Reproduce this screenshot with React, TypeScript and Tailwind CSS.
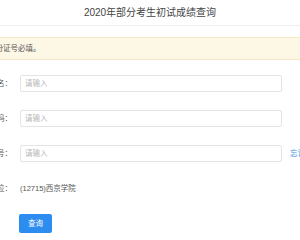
const fields = [
    { label: '姓名：', extra: null },
    { label: '证件号码：', extra: null },
    { label: '准考证号：', extra: '忘记准考证号？' },
];

const App = () => {
    return (
        <div className="w-[300px] h-[240px] overflow-hidden bg-white font-['Liberation_Sans','Noto_Sans_CJK_SC',sans-serif]">
            {/* Title */}
            <div className="h-[26px] flex items-center justify-center border-b border-[#eeeeee] text-[10px] text-[#444]">
                2020年部分考生初试成绩查询
            </div>

            {/* Notice */}
            <div className="mt-[11px] ml-[-21px] h-[23px] flex items-center pl-[9px] bg-[#fdf7e6] border-y border-[#f7e8c4] text-[7.5px] text-[#555] whitespace-nowrap">
                身份证号必填。
            </div>

            {/* Form */}
            <div className="ml-[-48px] mt-[15px] flex flex-col gap-[18px]">
                {fields.map((field) => (
                    <div key={field.label} className="flex items-center h-[17px] gap-[8px]">
                        <div className="w-[60px] shrink-0 text-right text-[7.5px] text-[#555] whitespace-nowrap">
                            {field.label}
                        </div>
                        <input
                            placeholder="请输入"
                            className="w-[262px] shrink-0 h-[17px] px-[4px] rounded-[2px] border border-[#e2e4e8] bg-white text-[7.5px] placeholder:text-[#b8b8b8] outline-none"
                        />
                        {field.extra && (
                            <span className="text-[7.5px] text-[#3a8ee6] whitespace-nowrap">
                                {field.extra}
                            </span>
                        )}
                    </div>
                ))}

                <div className="flex items-center h-[17px] gap-[8px] mt-[-0px]">
                    <div className="w-[60px] shrink-0 text-right text-[7.5px] text-[#555] whitespace-nowrap">
                        报考单位：
                    </div>
                    <span className="text-[7.5px] text-[#555] whitespace-nowrap">
                        (12715)西京学院
                    </span>
                </div>

                <div className="flex mt-[-1px] pl-[67px]">
                    <button className="w-[33px] h-[19px] rounded-[2px] bg-[#2d8cf0] text-white text-[7.5px]">
                        查询
                    </button>
                </div>
            </div>
        </div>
    );
};

export default App;
